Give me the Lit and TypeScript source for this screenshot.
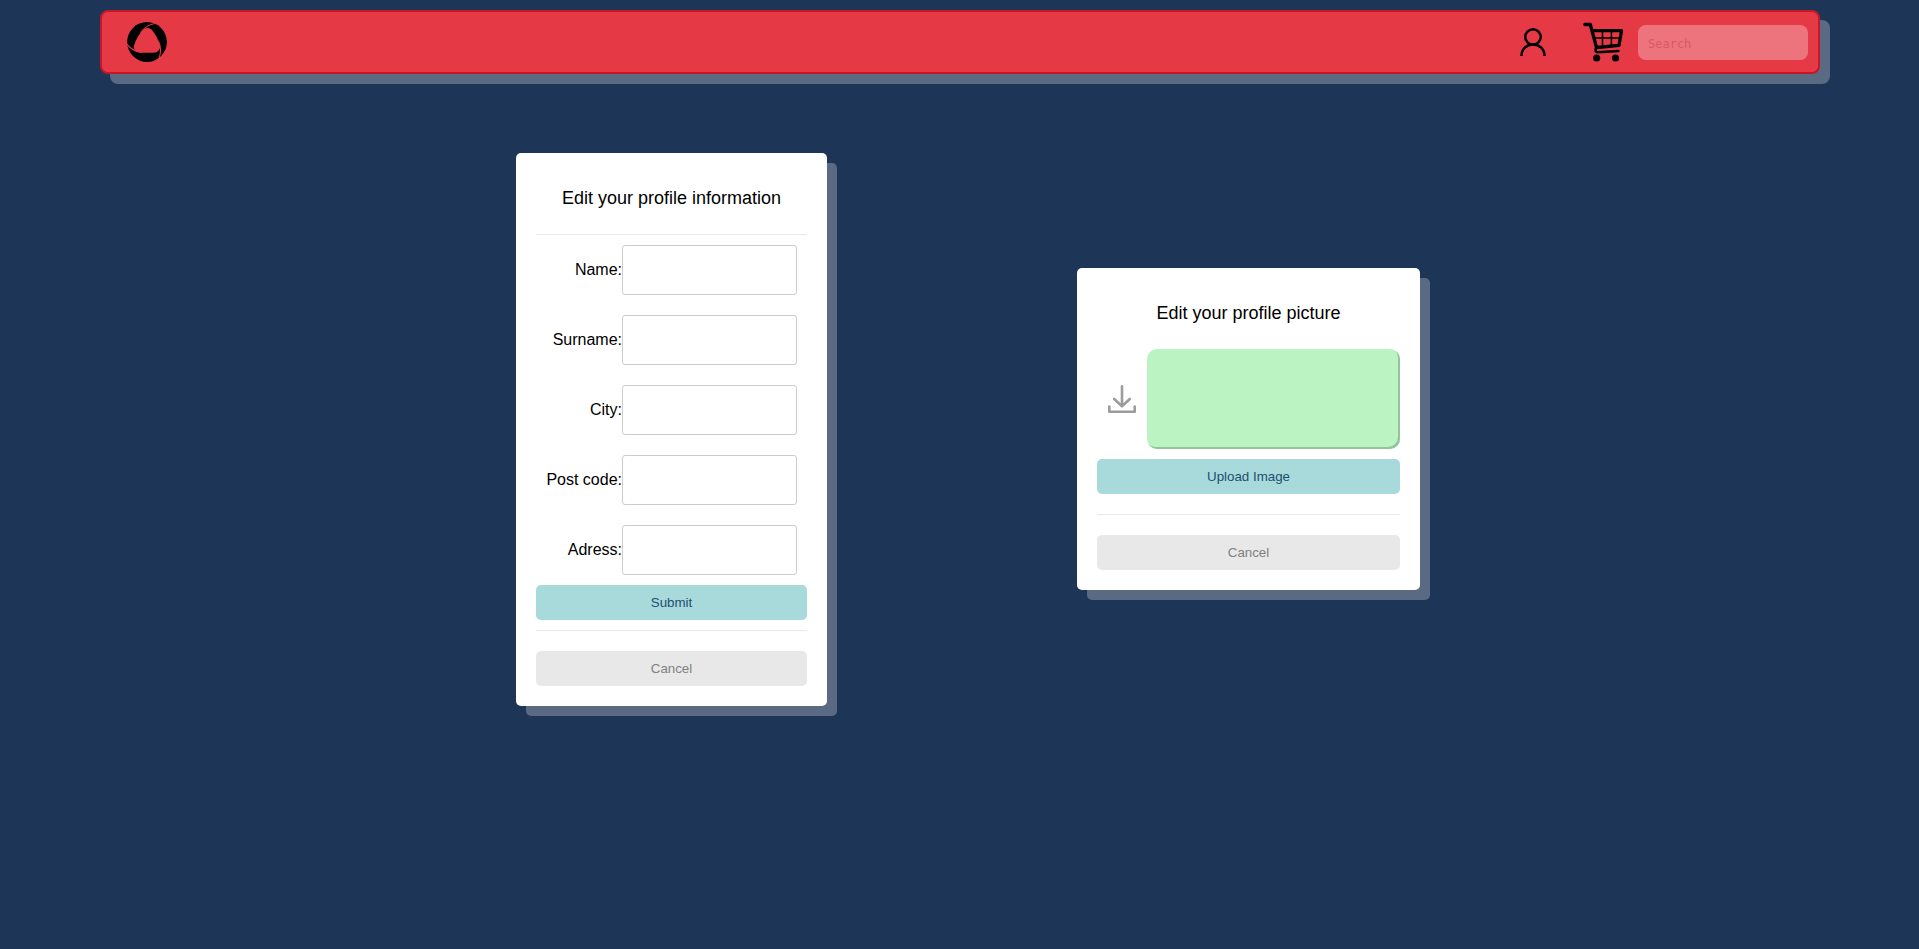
import { LitElement, html, css } from "lit";
import { customElement } from "lit/decorators.js";

@customElement("app-navbar")
class AppNavbar extends LitElement {
  static styles = css`
    :host {
      display: flex;
      align-items: center;
      box-sizing: border-box;
      height: 64px;
      padding: 0 10px 0 25px;
      background: #e63946;
      border: 2px solid #c81724;
      border-radius: 8px;
      box-shadow: 10px 10px 0 #5a6a82;
    }
    svg {
      display: block;
      flex: none;
    }
    .spacer {
      flex: 1;
    }
    .user {
      margin-right: 37px;
    }
    .cart {
      margin-right: 14px;
    }
    .search {
      box-sizing: border-box;
      width: 170px;
      height: 35px;
      padding: 2px 10px 0;
      margin: 1px 0 0;
      border: 0;
      border-radius: 8px;
      background: rgba(255, 255, 255, 0.3);
      font: 12px "DejaVu Sans Mono", monospace;
      outline: none;
    }
    .search::placeholder {
      color: #d95864;
      opacity: 1;
    }
  `;

  render() {
    return html`
      <svg class="logo" width="40" height="40" viewBox="0 0 40 40">
        <circle cx="20" cy="20" r="19.900" />
        <path
          fill="#e63946"
          d="M17 7Q20.500 5 24.500 7.500Q31 15 33.200 24.200Q33.200 28.200 29 30.400Q20 31.500 9.800 30Q6.300 27.800 7 23.600Q10 13.500 17 7Z"
        />
        <g fill="none" stroke="#e63946" stroke-width="1">
          <path d="M13.500 10.500Q18.500 3 28.500 1.400" />
          <path d="M13.500 10.500Q18.500 3 28.500 1.400" transform="rotate(120 20 20)" />
          <path d="M13.500 10.500Q18.500 3 28.500 1.400" transform="rotate(240 20 20)" />
        </g>
      </svg>
      <div class="spacer"></div>
      <svg class="user" width="26" height="28" viewBox="0 0 26 28" fill="none" stroke="#000" stroke-width="2.500">
        <circle cx="13" cy="9" r="7.750" />
        <path d="M1.500 28C1.500 21 6.500 16.500 13 16.500S24.500 21 24.500 28" />
      </svg>
      <svg class="cart" width="41" height="40" viewBox="0 0 41 40" fill="none" stroke="#000" stroke-linecap="round" stroke-linejoin="round">
        <path stroke-width="3.300" d="M1.800 2.500H7.300L13.500 25.500L36 23.300L38.500 8.700H9.500" />
        <path stroke-width="1.600" d="M10.500 16H37.500M19.500 9V25M28.400 9V24" />
        <path stroke-width="2.500" d="M13.500 25.500C11.500 28 12.500 30.300 15 30.200L35.500 28.900" />
        <circle cx="13.700" cy="36" r="3.600" fill="#000" stroke="none" />
        <circle cx="32.500" cy="36" r="3.600" fill="#000" stroke="none" />
      </svg>
      <input class="search" placeholder="Search" />
    `;
  }
}

const cardStyles = css`
  :host {
    display: block;
    box-sizing: border-box;
    padding: 20px;
    background: #fff;
    border-radius: 5px;
    box-shadow: 10px 10px 0 #5a6a82;
    font: 16px/18px "Liberation Sans", Arial, sans-serif;
    color: #000;
  }
  .title {
    margin: 0;
    padding: 15px 0 26px;
    font-size: 18px;
    font-weight: 400;
    line-height: 20px;
    text-align: center;
  }
  .rule {
    height: 1px;
    background: #e8e8e8;
  }
  .button {
    display: block;
    width: 100%;
    height: 35px;
    padding: 0;
    border: 0;
    border-radius: 5px;
    font: 13.333px "Liberation Sans", Arial, sans-serif;
    background: #a8dadc;
    color: #1d4f6f;
  }
  .cancel {
    margin-top: 20px;
    background: #e8e8e8;
    color: #808080;
  }
`;

@customElement("profile-form")
class ProfileForm extends LitElement {
  static styles = [
    cardStyles,
    css`
      :host {
        width: 311px;
        height: 553px;
      }
      .row {
        display: flex;
        align-items: center;
        justify-content: flex-end;
        padding: 10px 10px 10px 0;
      }
      .field {
        box-sizing: border-box;
        width: 175px;
        height: 50px;
        margin: 0;
        border: 1px solid #ccc;
        border-radius: 3px;
        outline: none;
      }
      .submit {
        margin-bottom: 10px;
      }
    `,
  ];

  private labels = ["Name:", "Surname:", "City:", "Post code:", "Adress:"];

  render() {
    return html`
      <h2 class="title">Edit your profile information</h2>
      <div class="rule"></div>
      ${this.labels.map(
        (label) => html`<label class="row"><span>${label}</span><input class="field" /></label>`
      )}
      <button class="button submit">Submit</button>
      <div class="rule"></div>
      <button class="button cancel">Cancel</button>
    `;
  }
}

@customElement("picture-form")
class PictureForm extends LitElement {
  static styles = [
    cardStyles,
    css`
      :host {
        width: 343px;
        height: 322px;
      }
      .drop {
        display: flex;
        align-items: center;
        justify-content: space-between;
        padding-left: 11px;
        margin-bottom: 10px;
      }
      .preview {
        width: 253px;
        height: 100px;
        border-radius: 10px;
        background: #bbf3c3;
        box-shadow: inset -2px -2px 0 #93c49b;
      }
      .upload {
        margin-bottom: 20px;
      }
    `,
  ];

  render() {
    return html`
      <h2 class="title">Edit your profile picture</h2>
      <div class="drop">
        <svg width="28" height="28" viewBox="0 0 28 28" fill="none" stroke="#9c9c9c" stroke-width="2.600" stroke-linecap="round" stroke-linejoin="round">
          <path d="M14 1.300V21M6.200 14L14 21.300L21.800 14M1.300 21.500V26.700H26.700V21.500" />
        </svg>
        <div class="preview"></div>
      </div>
      <button class="button upload">Upload Image</button>
      <div class="rule"></div>
      <button class="button cancel">Cancel</button>
    `;
  }
}

@customElement("app-root")
class AppRoot extends LitElement {
  static styles = css`
    :host {
      display: block;
      box-sizing: border-box;
      height: 949px;
      padding: 10px 99px 0 100px;
      background: #1d3557;
      overflow: hidden;
    }
    .main {
      display: flex;
      align-items: flex-start;
      gap: 250px;
      padding: 79px 0 0 416px;
    }
    .picture {
      margin-top: 115px;
    }
  `;

  render() {
    return html`
      <app-navbar></app-navbar>
      <main class="main">
        <profile-form></profile-form>
        <picture-form class="picture"></picture-form>
      </main>
    `;
  }
}
